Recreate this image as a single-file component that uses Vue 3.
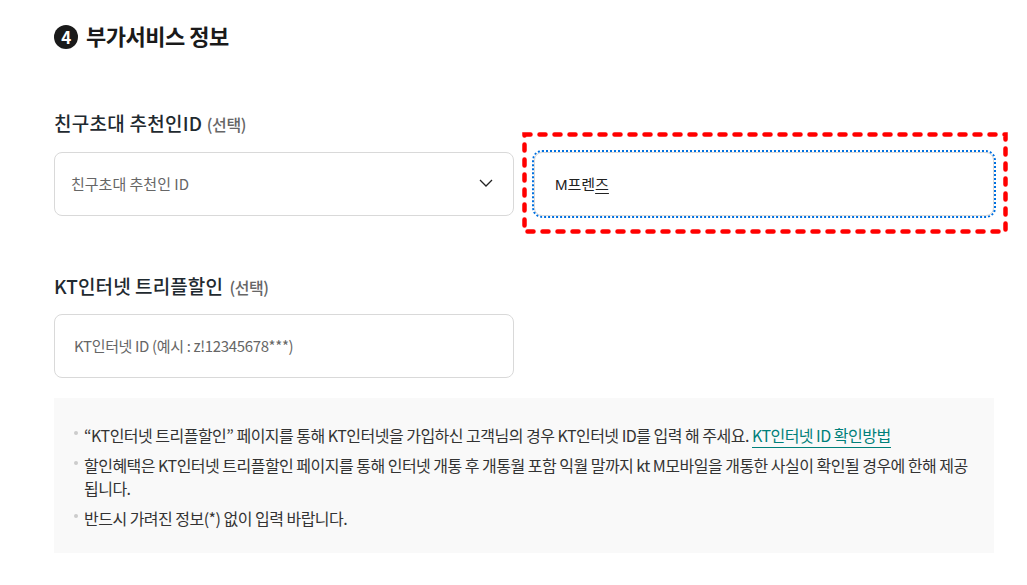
<template>
  <div class="page">
    <h2 class="section-title"><span class="num">4</span>부가서비스 정보</h2>

    <h3 class="label first">친구초대 추천인ID <small>(선택)</small></h3>
    <div class="row">
      <div class="field select">
        <span>친구초대 추천인 ID</span>
        <svg class="chevron" width="14" height="8" viewBox="0 0 14 8">
          <path d="M1 1l6 6 6-6" fill="none" stroke="#222" stroke-width="1.3" />
        </svg>
      </div>
      <div class="highlight">
        <div class="focus-box"><span class="typed"><b>M</b>프렌<u>즈</u></span></div>
        <svg class="marker" width="486" height="102" viewBox="0 0 486 102">
          <rect x="2.5" y="2.5" width="481" height="97" fill="none" stroke="#ff0000" stroke-width="4.5" stroke-linecap="round" stroke-dasharray="6 9" />
        </svg>
      </div>
    </div>

    <h3 class="label second">KT인터넷 트리플할인 <small>(선택)</small></h3>
    <div class="row">
      <div class="field input"><span>KT인터넷 ID (예시 : z!12345678***)</span></div>
    </div>

    <ul class="notice">
      <li>“KT인터넷 트리플할인” 페이지를 통해 KT인터넷을 가입하신 고객님의 경우 KT인터넷 ID를 입력 해 주세요. <a>KT인터넷 ID 확인방법</a></li>
      <li>할인혜택은 KT인터넷 트리플할인 페이지를 통해 인터넷 개통 후 개통월 포함 익월 말까지 kt M모바일을 개통한 사실이 확인될 경우에 한해 제공됩니다.</li>
      <li>반드시 가려진 정보(*) 없이 입력 바랍니다.</li>
    </ul>
  </div>
</template>

<script setup>
</script>

<style>
body {
  background: #fff;
}
</style>

<style scoped>
.page {
  width: 940px;
  height: 585px;
  box-sizing: border-box;
  margin-left: 54px;
  padding-top: 22px;
  font-family: "Noto Sans CJK KR", "Noto Sans", sans-serif;
  color: #222;
}

.section-title {
  margin: 0;
  display: flex;
  align-items: center;
  gap: 8px;
  font-size: 22px;
  letter-spacing: -0.5px;
  line-height: 27px;
  font-weight: 700;
  color: #1a1a1a;
}

.num {
  width: 24px;
  height: 24px;
  margin-top: 2px;
  border-radius: 50%;
  background: #1a1a1a;
  color: #fff;
  font-size: 17px;
  display: flex;
  align-items: center;
  justify-content: center;
}

.label {
  margin: 0 0 15px;
  font-size: 19px;
  line-height: 26px;
  font-weight: 500;
  color: #1f2a30;
}

.label.first {
  margin-top: 61px;
  letter-spacing: 0.25px;
}

.label.second {
  margin-top: 57px;
  letter-spacing: 0.1px;
}

.label.second {
  margin-bottom: 14px;
}

.label small {
  font-size: 16px;
  letter-spacing: -0.4px;
  font-weight: 500;
  color: #666;
}

.label.second small {
  margin-left: 2px;
}

.row {
  display: flex;
  gap: 20px;
  height: 64px;
}

.field {
  width: 460px;
  height: 64px;
  box-sizing: border-box;
  border: 1px solid #d9d9d9;
  border-radius: 8px;
  display: flex;
  align-items: center;
  justify-content: space-between;
  padding-bottom: 2px;
  font-size: 15px;
  color: #666;
}

.select {
  padding-left: 16px;
  padding-right: 20px;
}

.input {
  padding-left: 19px;
  padding-right: 19px;
  letter-spacing: -0.35px;
}

.highlight {
  position: relative;
  width: 460px;
  height: 64px;
}

.marker {
  position: absolute;
  left: -12px;
  top: -20px;
}

.focus-box {
  height: 64px;
  box-sizing: border-box;
  border: 1px solid #d9d9d9;
  outline: 2px dotted #0070e0;
  border-radius: 8px;
  padding: 0 20px 2px;
  display: flex;
  align-items: center;
  font-size: 15px;
  color: #222;
}

.typed b {
  font-family: "Liberation Sans", sans-serif;
  font-weight: 400;
}

.typed u {
  text-underline-offset: 3px;
  text-decoration-thickness: 1px;
}

.notice {
  margin: 20px 0 0;
  padding: 26px 20px 23px;
  list-style: none;
  background: #f9f9f9;
  font-size: 16px;
  letter-spacing: -0.52px;
  line-height: 23px;
  color: #333;
}

.notice li {
  position: relative;
  padding-left: 10px;
  margin-bottom: 7px;
}

.notice li:last-child {
  margin-bottom: 0;
}

.notice li::before {
  content: "";
  position: absolute;
  left: 0;
  top: 7px;
  width: 4px;
  height: 4px;
  border-radius: 50%;
  background: #ccc;
}

.notice a {
  color: #00807a;
  border-bottom: 1px solid #00807a;
}
</style>
